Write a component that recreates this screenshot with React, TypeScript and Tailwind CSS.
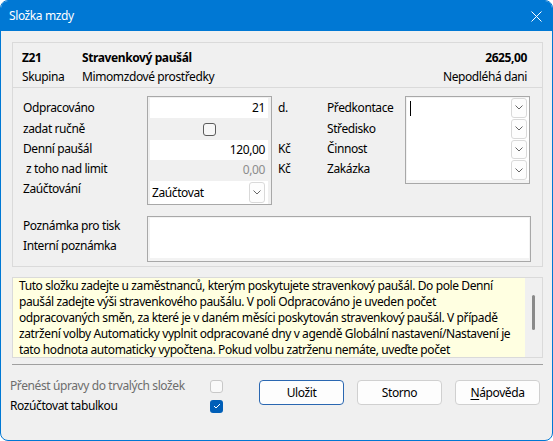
import React from 'react';

/**
 * Dialog „Složka mzdy" — stravenkový paušál
 */

const HELP_LINES = [
  'Tuto složku zadejte u zaměstnanců, kterým poskytujete stravenkový paušál. Do pole Denní',
  'paušál zadejte výši stravenkového paušálu. V poli Odpracováno je uveden počet',
  'odpracovaných směn, za které je v daném měsíci poskytován stravenkový paušál. V případě',
  'zatržení volby Automaticky vyplnit odpracované dny v agendě Globální nastavení/Nastavení je',
  'tato hodnota automaticky vypočtena. Pokud volbu zatrženu nemáte, uveďte počet',
];

function Chevron() {
  return (
    <svg width="8" height="5" viewBox="0 0 8 5" fill="none">
      <path d="M0.5 0.5 L4 4 L7.5 0.5" stroke="#666" strokeWidth="1" />
    </svg>
  );
}

function DropBtn({ h = 'h-[20px]' }: { h?: string }) {
  return (
    <div className={`w-[16px] ${h} bg-[#fdfdfd] border border-[#d9d9d9] rounded-[3px] flex items-center justify-center`}>
      <Chevron />
    </div>
  );
}

function Check({ checked = false, disabled = false }: { checked?: boolean; disabled?: boolean }) {
  if (checked) {
    return (
      <div className="w-[13px] h-[13px] rounded-[3px] bg-[#005fb8] flex items-center justify-center">
        <svg width="8" height="6" viewBox="0 0 8 6" fill="none">
          <path d="M1 3 L3 5 L7 1" stroke="#fff" strokeWidth="1" />
        </svg>
      </div>
    );
  }
  return (
    <div
      className={
        disabled
          ? 'w-[13px] h-[13px] rounded-[3px] border border-[#c8c8c8] bg-[#f9f9f9]'
          : 'w-[13px] h-[13px] rounded-[3px] border border-[#5c5c5c] bg-[#f7f7f7]'
      }
    />
  );
}

export default function App() {
  return (
    <div className="w-[553px] h-[441px] bg-white">
      <div className="w-full h-full flex flex-col border border-[#0078d4] rounded-[8px] overflow-hidden bg-[#f0f0f0] text-[12px] tracking-[-0.4px] text-black font-['Noto_Sans',sans-serif]">
        {/* titulek */}
        <div className="h-[30px] shrink-0 bg-[#0078d4] flex items-center justify-between pl-[8px] pr-[10px] text-white">
          <span>Složka mzdy</span>
          <svg width="11" height="11" viewBox="0 0 11 11" fill="none">
            <path d="M0.5 0.5 L10.5 10.5 M10.5 0.5 L0.5 10.5" stroke="#fff" strokeWidth="1" />
          </svg>
        </div>

        <div className="flex-1 flex flex-col pl-[11px] pr-[9px] pt-[11px]">
          {/* hlavní panel */}
          <div className="border border-[#dadada]">
            <div className="h-[45px] border-b border-[#dadada] pl-[9px] pr-[15px] pt-[5px] leading-[19px]">
              <div className="flex">
                <span className="w-[60px] font-bold">Z21</span>
                <span className="flex-1 font-bold">Stravenkový paušál</span>
                <span className="font-bold">2625,00</span>
              </div>
              <div className="flex">
                <span className="w-[60px]">Skupina</span>
                <span className="flex-1">Mimomzdové prostředky</span>
                <span>Nepodléhá dani</span>
              </div>
            </div>

            <div className="pt-[8px] pl-[10px] pb-[4px]">
              <div className="flex items-start">
                {/* popisky */}
                <div className="w-[124px] flex flex-col pt-[1px]">
                  <div className="h-[21px] flex items-center">Odpracováno</div>
                  <div className="h-[21px] flex items-center">zadat ručně</div>
                  <div className="h-[20px] flex items-center">Denní paušál</div>
                  <div className="h-[20px] flex items-center pl-[3px]">z toho nad limit</div>
                  <div className="h-[20px] flex items-center">Zaúčtování</div>
                </div>

                {/* hodnoty */}
                <div className="w-[125px] h-[109px] border border-[#a8a8a8] pl-[2px] pr-[3px] pt-[1px] flex flex-col">
                  <div className="h-[20px] bg-white flex items-center justify-end pr-[3px]">21</div>
                  <div className="h-[20px] mt-[1px] flex items-center justify-center">
                    <Check />
                  </div>
                  <div className="h-[20px] mt-[1px] bg-white flex items-center justify-end pr-[3px]">120,00</div>
                  <div className="h-[20px] flex items-center justify-end pr-[3px] text-[#8c8c8c]">0,00</div>
                  <div className="h-[23px] mt-[1px] bg-white flex items-center justify-between pl-[2px] pr-[3px]">
                    <span>Zaúčtovat</span>
                    <DropBtn h="h-[21px]" />
                  </div>
                </div>

                {/* jednotky */}
                <div className="w-[49px] ml-[6px] flex flex-col pt-[1px]">
                  <div className="h-[21px] flex items-center">d.</div>
                  <div className="h-[21px]" />
                  <div className="h-[20px] flex items-center">Kč</div>
                  <div className="h-[20px] flex items-center">Kč</div>
                </div>

                {/* členění */}
                <div className="w-[78px] flex flex-col pt-[1px]">
                  <div className="h-[21px] flex items-center">Předkontace</div>
                  <div className="h-[21px] flex items-center">Středisko</div>
                  <div className="h-[20px] flex items-center">Činnost</div>
                  <div className="h-[20px] flex items-center">Zakázka</div>
                </div>

                <div className="w-[125px] h-[88px] border border-[#a8a8a8] bg-[#f3f3f3] pl-[1px] pt-[1px] pb-[3px]">
                  <div className="h-full bg-white flex pr-[2px]">
                    <div className="flex-1">
                      <div className="w-px h-[15px] bg-black mt-[3px] ml-[3px]" />
                    </div>
                    <div className="flex flex-col gap-[1px]">
                      <DropBtn />
                      <DropBtn />
                      <DropBtn />
                      <DropBtn />
                    </div>
                  </div>
                </div>
              </div>

              {/* poznámky */}
              <div className="flex items-start mt-[11px]">
                <div className="w-[124px] flex flex-col">
                  <div className="h-[20px] flex items-center">Poznámka pro tisk</div>
                  <div className="h-[20px] flex items-center">Interní poznámka</div>
                </div>
                <div className="w-[384px] h-[46px] border border-[#a8a8a8] bg-[#f3f3f3] pl-[2px] pt-[1px] pr-[1px] pb-[3px]">
                  <div className="h-full bg-white" />
                </div>
              </div>
            </div>
          </div>

          {/* nápověda */}
          <div className="mt-[10px] h-[81px] border border-[#dadada] flex">
            <div className="flex-1 bg-[#ffffe1] pl-[6px] leading-[16px] overflow-hidden">
              {HELP_LINES.map((line) => (
                <div key={line} className="whitespace-nowrap">
                  {line}
                </div>
              ))}
            </div>
            <div className="w-[17px] bg-[#f0f0f0] flex justify-center">
              <div className="mt-[17px] w-[3px] h-[35px] bg-[#8a8a8a] rounded-full" />
            </div>
          </div>

          <div className="mt-[6px] h-px bg-[#a0a0a0]" />

          {/* spodní lišta */}
          <div className="flex items-start mt-[11px] -ml-[2px]">
            <div className="flex flex-col">
              <div className="h-[20px] flex items-center">
                <span className="w-[200px] text-[#6d6d6d]">Přenést úpravy do trvalých složek</span>
                <Check disabled />
              </div>
              <div className="h-[20px] flex items-center">
                <span className="w-[200px]">Rozúčtovat tabulkou</span>
                <Check checked />
              </div>
            </div>
            <div className="flex gap-[13px] ml-[36px] mt-[4px]">
              <button className="w-[85px] h-[25px] rounded-[4px] bg-[#fdfdfd] border border-[#2a67b1]">Uložit</button>
              <button className="w-[85px] h-[25px] rounded-[4px] bg-[#fdfdfd] border border-[#d0d0d0]">Storno</button>
              <button className="w-[85px] h-[25px] rounded-[4px] bg-[#fdfdfd] border border-[#d0d0d0]">
                <span className="underline underline-offset-2">N</span>ápověda
              </button>
            </div>
          </div>
        </div>
      </div>
    </div>
  );
}
